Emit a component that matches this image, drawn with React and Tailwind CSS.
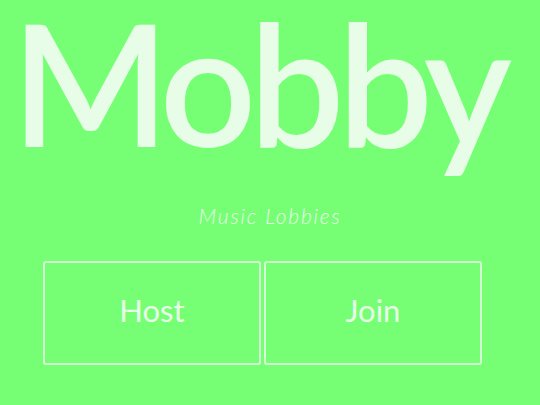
import React from "react";

const font = { fontFamily: "Lato, 'Open Sans', sans-serif" };

export default function App() {
  return (
    <div
      className="min-h-screen w-full bg-[#76ff74] text-[#e8fde8] flex flex-col"
      style={font}
    >
      <h1 className="text-center text-[169px] leading-[0.965] font-semibold tracking-[-7px] pr-[24px]">
        Mobby
      </h1>
      <p className="text-center text-[21px] font-light italic leading-none mt-[42px] tracking-[1.8px]">
        Music Lobbies
      </p>
      <div className="flex gap-[3px] pl-[43px] mt-[35px]">
        <button className="w-[218px] h-[104px] border-2 border-[#d2fdd2] rounded-[3px] text-[31px] flex items-center justify-center pb-[6px]">
          Host
        </button>
        <button className="w-[218px] h-[104px] border-2 border-[#d2fdd2] rounded-[3px] text-[31px] flex items-center justify-center pb-[6px]">
          Join
        </button>
      </div>
    </div>
  );
}
